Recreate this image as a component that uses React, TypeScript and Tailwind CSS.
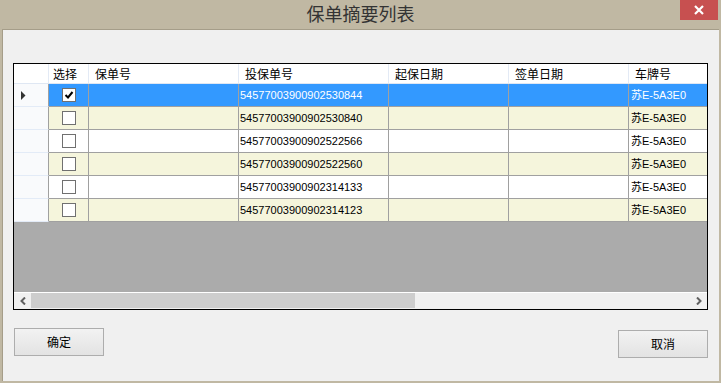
import React from 'react'

const rows = [
    '54577003900902530844',
    '54577003900902530840',
    '54577003900902522566',
    '54577003900902522560',
    '54577003900902314133',
    '54577003900902314123',
]

const cjk = { fontFamily: '"Noto Sans CJK SC", sans-serif' }
const cell = { fontFamily: '"Liberation Sans", "Noto Sans CJK SC", sans-serif' }

function CheckBox({ checked }: { checked: boolean }) {
    return (
        <div className="w-[14px] h-[14px] border border-[#707070] bg-white flex items-center justify-center">
            {checked && (
                <svg width="10" height="10" viewBox="0 0 10 10">
                    <path d="M1.5 5 L4 7.5 L8.5 2" stroke="#000" strokeWidth="2" fill="none" />
                </svg>
            )}
        </div>
    )
}

export default function App() {
    return (
        <div className="w-[721px] h-[383px] bg-[#c0b8a3] flex flex-col px-[2px] pb-[2px] overflow-hidden">
            {/* Title bar */}
            <div className="h-[29px] shrink-0 relative flex items-center justify-center">
                <span className="text-[18px] leading-none text-[#333] -mt-[3px]" style={cjk}>保单摘要列表</span>
                <div className="absolute right-[1px] top-0 w-[38px] h-[20px] bg-[#c75050] flex items-center justify-center">
                    <svg width="10" height="10" viewBox="0 0 10 10">
                        <path d="M1 1 L9 9 M9 1 L1 9" stroke="#fff" strokeWidth="2.2" />
                    </svg>
                </div>
            </div>

            {/* Client area */}
            <div className="flex-1 bg-[#f0f0f0] border-t border-l border-[#a59d89] flex flex-col">
                {/* Grid */}
                <div className="mt-[33px] ml-[10px] w-[695px] h-[247px] border border-black bg-[#ababab] flex flex-col overflow-hidden">
                    {/* Header */}
                    <div className="h-[20px] bg-white flex text-[12px] text-black border-b border-[#dfe7f3]" style={cjk}>
                        <div className="w-[35px] shrink-0 border-r border-[#e3eaf5]" />
                        <div className="w-[40px] shrink-0 border-r border-[#e3eaf5] pl-[4px] leading-[19px]">选择</div>
                        <div className="w-[150px] shrink-0 border-r border-[#e3eaf5] pl-[6px] leading-[19px]">保单号</div>
                        <div className="w-[150px] shrink-0 border-r border-[#e3eaf5] pl-[6px] leading-[19px]">投保单号</div>
                        <div className="w-[120px] shrink-0 border-r border-[#e3eaf5] pl-[6px] leading-[19px]">起保日期</div>
                        <div className="w-[120px] shrink-0 border-r border-[#e3eaf5] pl-[6px] leading-[19px]">签单日期</div>
                        <div className="w-[120px] shrink-0 pl-[6px] leading-[19px]">车牌号</div>
                    </div>

                    {/* Rows */}
                    {rows.map((no, i) => {
                        const sel = i === 0
                        const bg = sel ? 'bg-[#3399ff] text-white' : i % 2 === 1 ? 'bg-[#f5f5dc] text-black' : 'bg-white text-black'
                        return (
                            <div key={no} className="h-[23px] flex text-[11px]" style={cell}>
                                <div className="w-[35px] shrink-0 bg-[#f9fafc] border-r border-r-[#a0a0a0] border-b border-b-[#e3ebf7] flex items-center pl-[7px]">
                                    {sel && (
                                        <svg width="5" height="9" viewBox="0 0 5 9">
                                            <path d="M0 0 L4.5 4.5 L0 9 Z" fill="#333" />
                                        </svg>
                                    )}
                                </div>
                                <div className={`flex flex-1 border-b border-[#a0a0a0] ${bg}`}>
                                    <div className="w-[40px] shrink-0 border-r border-[#a0a0a0] flex items-center justify-center">
                                        <CheckBox checked={sel} />
                                    </div>
                                    <div className="w-[150px] shrink-0 border-r border-[#a0a0a0]" />
                                    <div className="w-[150px] shrink-0 border-r border-[#a0a0a0] pl-[1px] leading-[22px]">{no}</div>
                                    <div className="w-[120px] shrink-0 border-r border-[#a0a0a0]" />
                                    <div className="w-[120px] shrink-0 border-r border-[#a0a0a0]" />
                                    <div className="w-[120px] shrink-0 pl-[2px] leading-[22px]">苏E-5A3E0</div>
                                </div>
                            </div>
                        )
                    })}

                    <div className="flex-1" />

                    {/* Horizontal scrollbar */}
                    <div className="h-[17px] shrink-0 bg-[#f0f0f0] border-t border-white flex">
                        <div className="w-[17px] h-[15px] flex items-center justify-center">
                            <svg width="6" height="8" viewBox="0 0 6 8">
                                <path d="M5 0.5 L1.5 4 L5 7.5" stroke="#606060" strokeWidth="2" fill="none" />
                            </svg>
                        </div>
                        <div className="flex-1 h-[15px]">
                            <div className="w-[384px] h-full bg-[#cdcdcd]" />
                        </div>
                        <div className="w-[17px] h-[15px] flex items-center justify-center">
                            <svg width="6" height="8" viewBox="0 0 6 8">
                                <path d="M1 0.5 L4.5 4 L1 7.5" stroke="#606060" strokeWidth="2" fill="none" />
                            </svg>
                        </div>
                    </div>
                </div>

                {/* Buttons */}
                <div className="flex justify-between items-start pl-[11px] pr-[11px]">
                    <button className="mt-[18px] w-[90px] h-[28px] border border-[#adadad] bg-gradient-to-b from-[#f2f2f2] to-[#e3e3e3] text-[12px] text-black" style={cjk}>
                        确定
                    </button>
                    <button className="mt-[20px] w-[90px] h-[28px] border border-[#adadad] bg-gradient-to-b from-[#f2f2f2] to-[#e3e3e3] text-[12px] text-black" style={cjk}>
                        取消
                    </button>
                </div>
            </div>
        </div>
    )
}
